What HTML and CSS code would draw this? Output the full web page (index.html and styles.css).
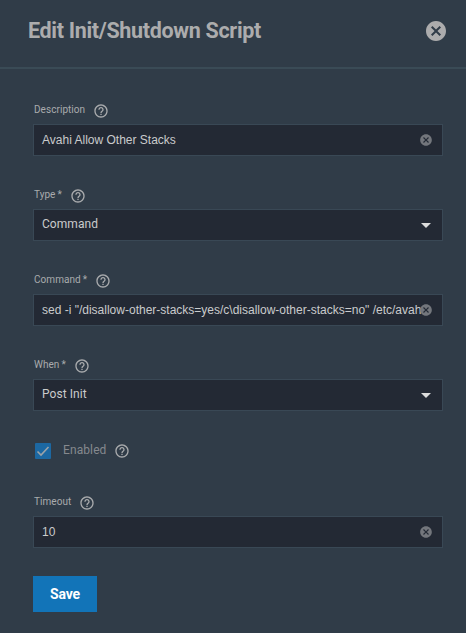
FILE: index.html
```html
<!DOCTYPE html>
<html lang="en">
<head>
<meta charset="utf-8">
<title>Edit Init/Shutdown Script</title>
<link rel="stylesheet" href="styles.css">
</head>
<body>
<svg class="defs" aria-hidden="true">
  <symbol id="help" viewBox="0 0 24 24"><path d="M11 18h2v-2h-2v2zm1-16C6.480 2 2 6.480 2 12s4.480 10 10 10 10-4.480 10-10S17.520 2 12 2zm0 18c-4.410 0-8-3.590-8-8s3.590-8 8-8 8 3.590 8 8-3.590 8-8 8zm0-14c-2.210 0-4 1.790-4 4h2c0-1.100.9-2 2-2s2 .9 2 2c0 2-3 1.750-3 5h2c0-2.250 3-2.500 3-5 0-2.210-1.790-4-4-4z"/></symbol>
  <symbol id="cancel" viewBox="0 0 24 24"><path d="M12 2C6.470 2 2 6.470 2 12s4.470 10 10 10 10-4.470 10-10S17.530 2 12 2zm5 13.590L15.590 17 12 13.410 8.410 17 7 15.590 10.590 12 7 8.410 8.410 7 12 10.590 15.590 7 17 8.410 13.410 12 17 15.590z"/></symbol>
</svg>
<header class="header">
  <h1 class="title">Edit Init/Shutdown Script</h1>
  <svg class="close"><use href="#cancel"/></svg>
</header>
<main class="form">
  <section class="field">
    <div class="label"><span class="w-description">Description</span><svg class="help"><use href="#help"/></svg></div>
    <div class="control"><span class="value input">Avahi Allow Other Stacks</span><svg class="clear"><use href="#cancel"/></svg></div>
  </section>
  <section class="field">
    <div class="label"><span class="w-type">Type<b class="req">*</b></span><svg class="help"><use href="#help"/></svg></div>
    <div class="control"><span class="value">Command</span><i class="arrow"></i></div>
  </section>
  <section class="field">
    <div class="label"><span class="w-command">Command<b class="req">*</b></span><svg class="help"><use href="#help"/></svg></div>
    <div class="control"><span class="value input">sed -i "/disallow-other-stacks=yes/c\disallow-other-stacks=no" /etc/avah</span><svg class="clear"><use href="#cancel"/></svg></div>
  </section>
  <section class="field">
    <div class="label"><span class="w-when">When<b class="req">*</b></span><svg class="help"><use href="#help"/></svg></div>
    <div class="control"><span class="value">Post Init</span><i class="arrow"></i></div>
  </section>
  <div class="check-row">
    <span class="checkbox"><svg class="tick" viewBox="0 0 16 16"><path d="M2.500 8.500 6 12 13.500 4"/></svg></span>
    <span class="check-label">Enabled</span>
    <svg class="help"><use href="#help"/></svg>
  </div>
  <section class="field">
    <div class="label"><span class="w-timeout">Timeout</span><svg class="help"><use href="#help"/></svg></div>
    <div class="control"><span class="value input">10</span><svg class="clear"><use href="#cancel"/></svg></div>
  </section>
  <button class="save">Save</button>
</main>
</body>
</html>
```
FILE: styles.css
```css
* { box-sizing: border-box; }
body {
  margin: 0;
  height: 633px;
  overflow: hidden;
  background: #303c48;
  color: #a9abad;
  font-family: Roboto, sans-serif;
}
.defs { display: none; }
svg { display: block; flex: none; fill: currentColor; }
.header {
  display: flex;
  align-items: flex-start;
  justify-content: space-between;
  height: 69px;
  padding: 19px 18px 0 28px;
  border-bottom: 2px solid #3a4b56;
  color: #acacad;
}
.title {
  margin: 0;
  font: 700 21.5px/24px Roboto, sans-serif;
  letter-spacing: -0.32px;
  white-space: nowrap;
}
.close { width: 24px; height: 24px; }
.form { padding: 34px 23px 0 33px; }
.field { height: 53px; margin-bottom: 32px; }
.label {
  display: flex;
  align-items: flex-start;
  height: 21px;
  padding-left: 1px;
  font-size: 10px;
  line-height: 13px;
  letter-spacing: 0.05px;
  white-space: nowrap;
}
.req { margin-left: 2px; font-weight: 400; }
.help { width: 16px; height: 16px; }
.w-description { width: 58.500px; }
.w-type { width: 35.500px; }
.w-command { width: 60.500px; }
.w-when { width: 39.500px; }
.w-timeout { width: 45px; }
.control {
  display: flex;
  align-items: center;
  height: 32px;
  padding: 0 9px 0 8px;
  border: 1px solid #394855;
  background: #232934;
}
.value {
  flex: 1;
  min-width: 0;
  color: #cacbcc;
  font-size: 12px;
  line-height: 16px;
  letter-spacing: 0.05px;
  white-space: nowrap;
  padding-bottom: 2px;
}
.value.input {
  padding-bottom: 0;
  font-family: "Liberation Sans", sans-serif;
  letter-spacing: 0;
}
.clear {
  width: 14px;
  height: 14px;
  margin-left: -7px;
  color: #73767c;
}
.arrow {
  width: 10px;
  height: 5px;
  margin: 1px 2px 0 0;
  background: #dcdcdc;
  clip-path: polygon(0 0, 100% 0, 50% 100%);
}
.check-row {
  display: flex;
  height: 52px;
  padding-left: 2px;
}
.checkbox {
  width: 16px;
  height: 16px;
  margin-right: 12px;
  border-radius: 1px;
  background: #1c68a2;
}
.tick { fill: none; stroke: #9ca3a8; stroke-width: 1.600; }
.check-label {
  width: 51px;
  font-size: 12px;
  line-height: 14px;
  letter-spacing: 0.1px;
  color: #85898e;
}
.save {
  display: block;
  width: 64px;
  height: 36px;
  margin-top: -4px;
  padding: 0;
  border: 0;
  background: #1274b8;
  color: #fff;
  font: 700 14px/36px Roboto, sans-serif;
  letter-spacing: -0.2px;
}
```
